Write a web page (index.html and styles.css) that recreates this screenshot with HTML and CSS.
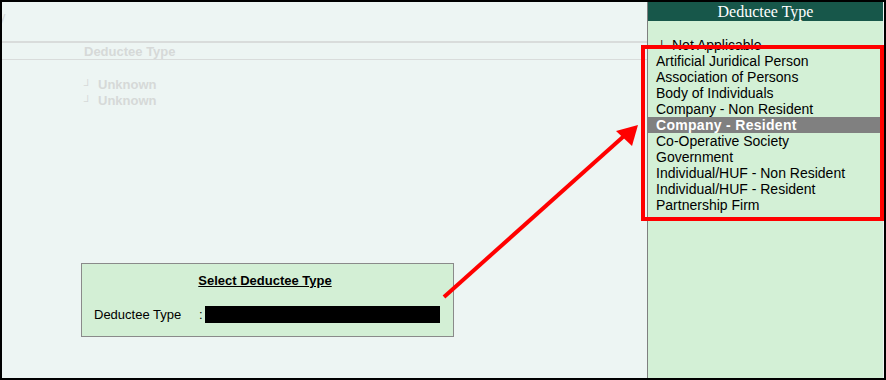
FILE: index.html
```html
<!DOCTYPE html>
<html lang="en">
<head>
    <meta charset="UTF-8">
    <title>Select Deductee Type</title>
    <link rel="stylesheet" href="styles.css">
</head>
<body>
    <div class="screen">
        <div class="main">
            <div class="crumb">y</div>
            <div class="col-head">Deductee Type</div>
            <div class="faded-list">
                <div class="faded-item"><span class="tick">&#x2518;</span>Unknown</div>
                <div class="faded-item"><span class="tick">&#x2518;</span>Unknown</div>
            </div>

            <div class="dialog">
                <div class="dialog-title">Select Deductee Type</div>
                <div class="dialog-row">
                    <span class="dialog-label">Deductee Type</span>
                    <span class="dialog-colon">:</span>
                    <span class="dialog-input"></span>
                </div>
            </div>
        </div>

        <div class="panel">
            <div class="panel-head">Deductee Type</div>
            <ul class="options">
                <li class="option"><span class="tick">&#x2518;</span>Not Applicable</li>
                <li class="option">Artificial Juridical Person</li>
                <li class="option">Association of Persons</li>
                <li class="option">Body of Individuals</li>
                <li class="option">Company - Non Resident</li>
                <li class="option selected">Company - Resident</li>
                <li class="option">Co-Operative Society</li>
                <li class="option">Government</li>
                <li class="option">Individual/HUF - Non Resident</li>
                <li class="option">Individual/HUF - Resident</li>
                <li class="option">Partnership Firm</li>
            </ul>
        </div>

        <!-- annotation overlay -->
        <div class="callout"></div>
        <svg class="arrow" width="886" height="380" viewBox="0 0 886 380">
            <line x1="444" y1="297" x2="624" y2="136" stroke="#ff0000" stroke-width="4"/>
            <polygon points="638,125 632,146 616,131" fill="#ff0000"/>
        </svg>
    </div>
</body>
</html>
```

FILE: styles.css
```css
:root {
    --main-bg: #edf5f3;
    --panel-bg: #d3f0d6;
    --head-bg: #17574a;
    --faded: #d6d9d8;
    --ink: #000;
}

body {
    margin: 0;
    font-family: 'Liberation Sans', Arial, sans-serif;
    font-size: 13px;
    color: var(--ink);
}

.screen {
    position: relative;
    width: 886px;
    height: 380px;
    box-sizing: border-box;
    border: 2px solid #000;
    background: var(--main-bg);
    display: flex;
    overflow: hidden;
}

.main {
    width: 645px;
    display: flex;
    flex-direction: column;
}

.crumb {
    color: var(--faded);
    height: 16px;
    margin-top: 7px;
    margin-left: -3px;
    line-height: 16px;
}

.col-head {
    margin-top: 16px;
    border-top: 2px solid #d9dcdb;
    border-bottom: 1px solid #d9dcdb;
    height: 15px;
    padding: 1px 0 0 82px;
    box-sizing: content-box;
    line-height: 15px;
    color: var(--faded);
    font-weight: bold;
}

.faded-list {
    padding: 17px 0 0 82px;
}

.faded-item {
    color: var(--faded);
    font-weight: bold;
    line-height: 16px;
}

.tick {
    display: inline-block;
    width: 14px;
    font-weight: normal;
    font-size: 11px;
}

.dialog {
    margin: 154px 0 0 79px;
    width: 371px;
    height: 72px;
    background: #d3efd5;
    border: 1px solid #8a8a8a;
}

.dialog-title {
    text-align: center;
    font-weight: bold;
    text-decoration: underline;
    margin-top: 9px;
    line-height: 16px;
    padding-right: 5px;
}

.dialog-row {
    display: flex;
    align-items: center;
    margin-top: 17px;
    padding-left: 12px;
}

.dialog-label {
    width: 105px;
}

.dialog-colon {
    width: 6px;
}

.dialog-input {
    width: 235px;
    height: 17px;
    background: #000;
}

.panel {
    width: 236px;
    border-left: 1px solid #7f7f7f;
    background: var(--panel-bg);
    box-sizing: border-box;
}

.panel-head {
    height: 19px;
    background: var(--head-bg);
    color: #fff;
    text-align: center;
    font-family: 'Liberation Serif', 'Times New Roman', serif;
    font-size: 16px;
    line-height: 19px;
}

.options {
    list-style: none;
    margin: 16px 0 0;
    padding: 0;
    font-size: 14px;
}

.option {
    height: 16px;
    line-height: 16px;
    padding-left: 8px;
    white-space: nowrap;
}

.option .tick {
    width: 16px;
    padding-left: 2px;
    box-sizing: border-box;
}

.option.selected {
    background: #808080;
    color: #fff;
    font-weight: bold;
    letter-spacing: 0.3px;
}

.callout {
    position: absolute;
    left: 639px;
    top: 43px;
    width: 235px;
    height: 168px;
    border: 4px solid #ff0000;
}

.arrow {
    position: absolute;
    left: -2px;
    top: -2px;
}
```
